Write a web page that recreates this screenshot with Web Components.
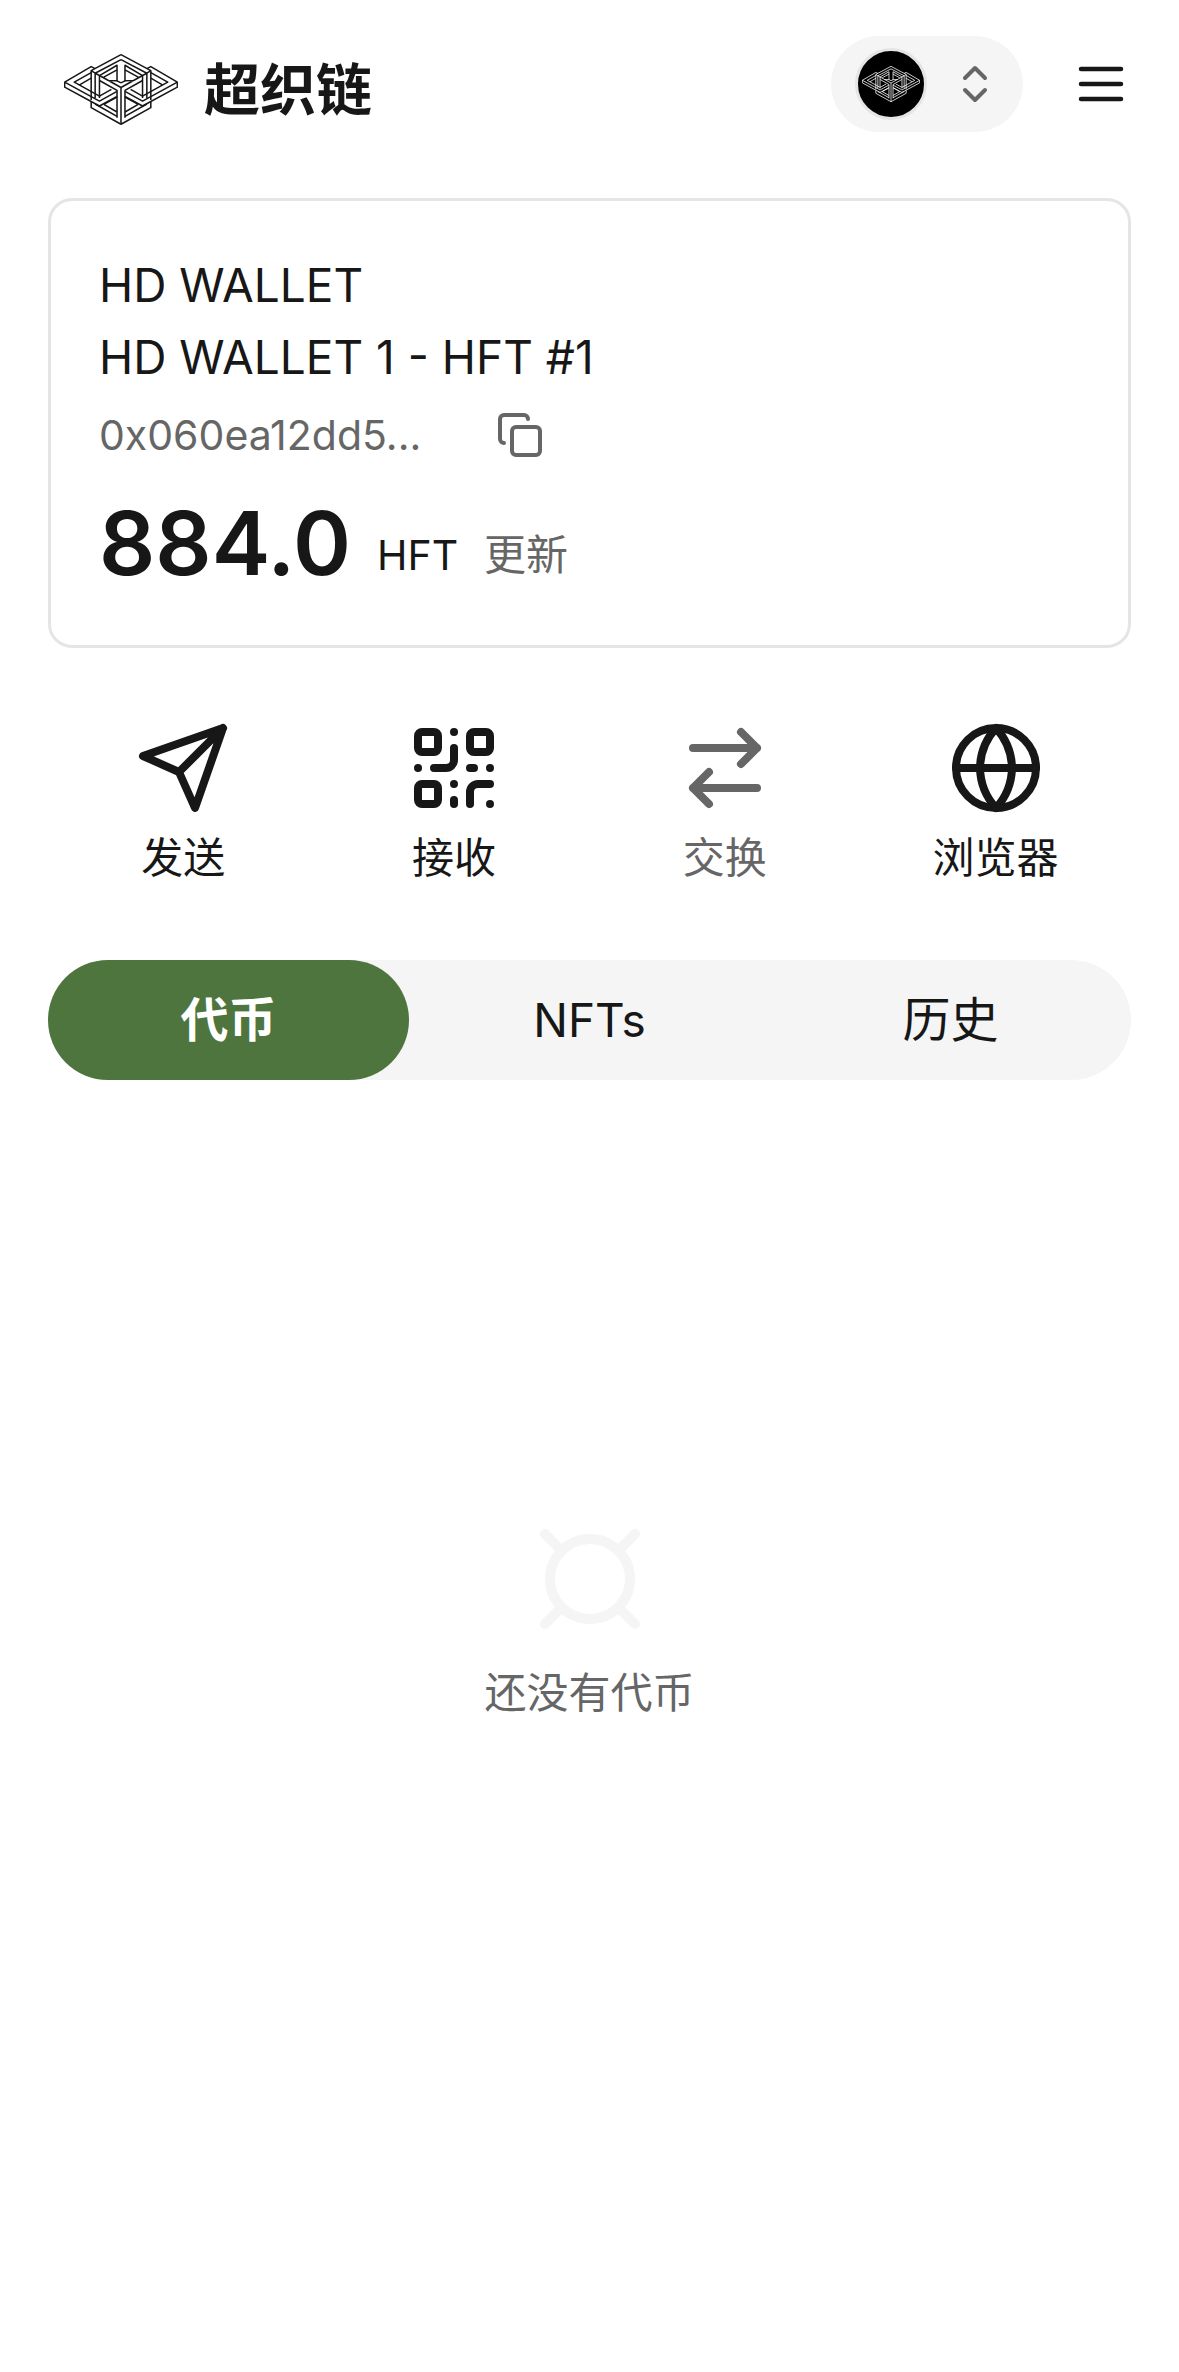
<!DOCTYPE html>
<html lang="zh-CN">
<head>
<meta charset="utf-8">
<meta name="viewport" content="width=device-width, initial-scale=1">
<title>超织链</title>
<style>
  body {
    margin: 0;
    background: #fff;
    color: #171717;
    font-family: Inter, "Noto Sans CJK SC", sans-serif;
    font-size: 42px;
    line-height: 60px;
  }
</style>
</head>
<body>

<template id="chain-mark">
  <style>
    :host { display: block; flex: none; width: 114px; }
    svg { display: block; width: 100%; }
  </style>
  <svg viewBox="5 10 344 216" fill="none" stroke="currentColor" stroke-width="4.6" stroke-linejoin="round" aria-hidden="true">
    <defs>
      <g id="half">
        <!-- cube frame -->
        <path d="M177 12 87 60v89M177 27 99 68v75M87 60l12 8 13 7v68M112 75l53-31v48"/>
        <!-- top arms -->
        <path d="M112 75l65 36M112 90l53 30v82M125 80l40-22M177 97l-12-6-27-1"/>
        <!-- wing -->
        <path d="M99 54 87 48 7 95v15l105 57 53-29M7 95l105 57 53-29M87 66 36 95l76 42 36-20M52 103l35-20"/>
        <!-- foot -->
        <path d="M87 155v17l90 50M99 161l66 37M125 162l40 23M125 162l40-22"/>
      </g>
    </defs>
    <use href="#half"/>
    <use href="#half" transform="matrix(-1 0 0 1 354 0)"/>
    <path d="M177 111v111"/>
  </svg>
</template>

<template id="line-icon">
  <style>
    :host { display: block; flex: none; width: 48px; height: 48px; }
    svg { display: block; width: 100%; height: 100%; }
  </style>
  <svg viewBox="0 0 24 24" fill="none" stroke="currentColor" stroke-width="2" stroke-linecap="round" stroke-linejoin="round" aria-hidden="true"></svg>
</template>

<template id="app-header">
  <style>
    :host {
      display: flex;
      align-items: center;
      justify-content: space-between;
      padding: 36px 48px 66px;
    }
    a {
      display: flex;
      align-items: center;
      gap: 26px;
      padding: 12px 0 0 16px;
      color: inherit;
      text-decoration: none;
      font-size: 56px;
      font-weight: 600;
    }
    nav { display: flex; align-items: center; gap: 48px; }
    button {
      padding: 0;
      border: none;
      background: none;
      color: inherit;
    }
    .account {
      display: flex;
      align-items: center;
      gap: 24px;
      padding: 12px 24px;
      border-radius: 48px;
      background: #f5f5f5;
      color: #666;
    }
    .avatar {
      display: grid;
      place-items: center;
      width: 66px;
      height: 66px;
      border: 3px solid #e5e5e5;
      border-radius: 50%;
      background: #000;
      color: #fff;
    }
    .avatar chain-mark { width: 58px; }
    .menu line-icon { width: 60px; height: 60px; }
  </style>
  <a href="#"><chain-mark></chain-mark><slot></slot></a>
  <nav>
    <button class="account" aria-label="切换账户">
      <span class="avatar"><chain-mark></chain-mark></span>
      <line-icon name="chevrons"></line-icon>
    </button>
    <button class="menu" aria-label="菜单"><line-icon name="menu"></line-icon></button>
  </nav>
</template>

<template id="wallet-card">
  <style>
    :host {
      display: block;
      margin: 0 48px;
      padding: 48px;
      border: 3px solid #e5e5e5;
      border-radius: 24px;
    }
    p { margin: 0; font-size: 46px; line-height: 72px; }
    button {
      display: block;
      padding: 0;
      border: none;
      background: none;
      color: #666;
      font: inherit;
    }
    .address {
      display: flex;
      align-items: center;
      gap: 75px;
      padding-top: 12px;
      color: #666;
      font-size: 41px;
    }
    .balance {
      display: flex;
      align-items: flex-end;
      gap: 26px;
      padding-top: 24px;
    }
    .balance > * { padding-bottom: 12px; }
    .balance strong {
      padding: 0;
      font-size: 88px;
      font-weight: 600;
      line-height: 108px;
    }
    .balance span { font-size: 41px; }
  </style>
  <p><slot name="wallet"></slot></p>
  <p><slot name="account"></slot></p>
  <div class="address">
    <slot name="address"></slot>
    <button aria-label="复制地址"><line-icon name="copy"></line-icon></button>
  </div>
  <div class="balance">
    <strong><slot name="amount"></slot></strong>
    <span><slot name="unit"></slot></span>
    <button>更新</button>
  </div>
</template>

<template id="action-bar">
  <style>
    :host {
      display: grid;
      grid-template-columns: repeat(4, 1fr);
      margin: 72px 48px;
    }
  </style>
  <slot></slot>
</template>

<template id="action-item">
  <style>
    :host { display: block; }
    button {
      display: flex;
      flex-direction: column;
      align-items: center;
      gap: 12px;
      width: 100%;
      padding: 0;
      border: none;
      background: none;
      color: inherit;
      font: inherit;
    }
    button:disabled { color: #666; }
    line-icon { width: 96px; height: 96px; }
  </style>
  <button><line-icon></line-icon><slot></slot></button>
</template>

<template id="tab-bar">
  <style>
    :host {
      display: grid;
      grid-template-columns: repeat(3, 1fr);
      margin: 0 48px;
      border-radius: 60px;
      background: #f5f5f5;
    }
    button {
      height: 120px;
      padding: 0;
      border: none;
      border-radius: 60px;
      background: none;
      color: inherit;
      font: inherit;
      font-size: 46px;
    }
    button:lang(zh) { font-size: 48px; }
    button[aria-selected="true"] {
      background: #4e753e;
      color: #fff;
      font-weight: 600;
    }
  </style>
</template>

<template id="empty-state">
  <style>
    :host {
      display: flex;
      flex: 1;
      flex-direction: column;
      align-items: center;
      justify-content: center;
      gap: 24px;
      padding-bottom: 210px;
      color: #666;
    }
    line-icon { width: 120px; height: 120px; color: #f5f5f5; }
  </style>
  <line-icon name="currency"></line-icon>
  <slot></slot>
</template>

<template id="wallet-app">
  <style>
    :host { display: flex; flex-direction: column; min-height: 100vh; }
  </style>
  <slot></slot>
</template>

<script>
  const icons = {
    menu: '<path stroke-width="1.8" d="M4 6h16M4 12h16M4 18h16"/>',
    chevrons: '<path d="m7 15 5 5 5-5M7 9l5-5 5 5"/>',
    copy: '<rect x="8" y="8" width="14" height="14" rx="2"/><path d="M4 16c-1.1 0-2-.9-2-2V4c0-1.1.9-2 2-2h10c1.1 0 2 .9 2 2"/>',
    send: '<path d="m22 2-7 20-4-9-9-4ZM22 2 11 13"/>',
    qr: `<rect x="3" y="3" width="5" height="5" rx="1"/><rect x="16" y="3" width="5" height="5" rx="1"/><rect x="3" y="16" width="5" height="5" rx="1"/>
      <path d="M21 16h-3a2 2 0 0 0-2 2v3M21 21v.01M12 7v3a2 2 0 0 1-2 2H7M3 12h.01M12 3h.01M12 16v.01M16 12h1M21 12v.01M12 21v-1"/>`,
    swap: '<path d="M4 7h16M16 3l4 4-4 4M20 17H4M8 21l-4-4 4-4"/>',
    globe: '<circle cx="12" cy="12" r="10"/><path d="M2 12h20M12 2a15.3 15.3 0 0 1 4 10 15.3 15.3 0 0 1-4 10 15.3 15.3 0 0 1-4-10 15.3 15.3 0 0 1 4-10z"/>',
    currency: '<circle cx="12" cy="12" r="8"/><path d="m3 3 3 3M21 3l-3 3M3 21l3-3M21 21l-3-3"/>'
  }

  class TemplateElement extends HTMLElement {
    constructor () {
      super()
      let template = document.querySelector(`template#${this.localName}`)
      this.attachShadow({ mode: 'open' }).appendChild(template.content.cloneNode(true))
    }
  }

  customElements.define('chain-mark', class ChainMark extends TemplateElement {})

  customElements.define('line-icon', class LineIcon extends TemplateElement {
    static get observedAttributes () { return ['name'] }
    attributeChangedCallback (name, oldValue, newValue) {
      this.shadowRoot.querySelector('svg').innerHTML = icons[newValue] ?? ''
    }
  })

  customElements.define('app-header', class AppHeader extends TemplateElement {})
  customElements.define('wallet-card', class WalletCard extends TemplateElement {})
  customElements.define('action-bar', class ActionBar extends TemplateElement {})

  customElements.define('action-item', class ActionItem extends TemplateElement {
    connectedCallback () {
      this.shadowRoot.querySelector('line-icon').setAttribute('name', this.getAttribute('icon'))
      this.shadowRoot.querySelector('button').disabled = this.hasAttribute('disabled')
    }
  })

  customElements.define('tab-bar', class TabBar extends TemplateElement {
    connectedCallback () {
      this.setAttribute('role', 'tablist')
      for (let label of this.getAttribute('tabs').split(',')) {
        let button = document.createElement('button')
        button.setAttribute('role', 'tab')
        button.lang = /^\w+$/.test(label) ? 'en' : 'zh-CN'
        button.textContent = label
        button.onclick = () => this.select(label)
        this.shadowRoot.append(button)
      }
      this.select(this.getAttribute('selected'))
    }
    select (label) {
      for (let button of this.shadowRoot.querySelectorAll('button')) {
        button.setAttribute('aria-selected', button.textContent === label)
      }
    }
  })

  customElements.define('empty-state', class EmptyState extends TemplateElement {})
  customElements.define('wallet-app', class WalletApp extends TemplateElement {})
</script>

<wallet-app>
  <app-header>超织链</app-header>
  <wallet-card>
    <span slot="wallet">HD WALLET</span>
    <span slot="account">HD WALLET 1 - HFT #1</span>
    <span slot="address">0x060ea12dd5...</span>
    <span slot="amount">884.0</span>
    <span slot="unit">HFT</span>
  </wallet-card>
  <action-bar>
    <action-item icon="send">发送</action-item>
    <action-item icon="qr">接收</action-item>
    <action-item icon="swap" disabled>交换</action-item>
    <action-item icon="globe">浏览器</action-item>
  </action-bar>
  <tab-bar tabs="代币,NFTs,历史" selected="代币"></tab-bar>
  <empty-state>还没有代币</empty-state>
</wallet-app>

</body>
</html>
